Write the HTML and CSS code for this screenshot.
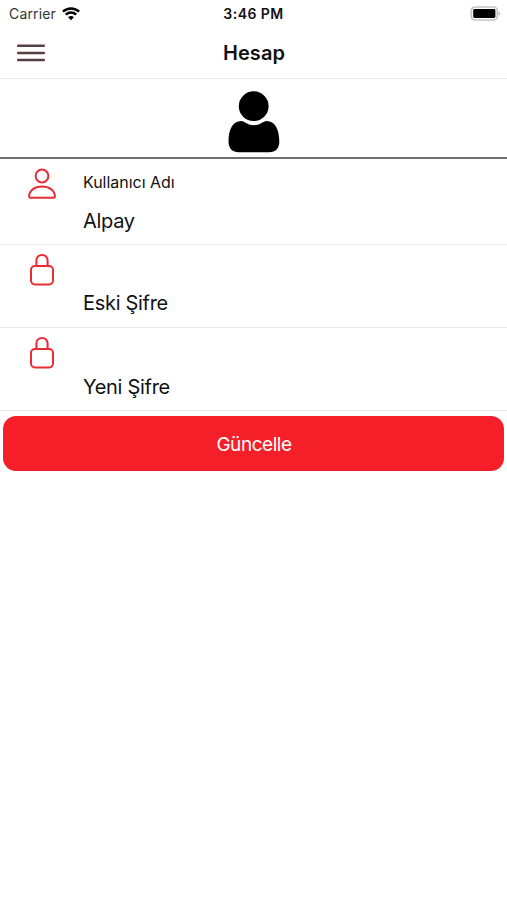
FILE: index.html
```html
<!DOCTYPE html>
<html lang="tr">
<head>
<meta charset="utf-8">
<meta name="viewport" content="width=device-width, initial-scale=1">
<title>Hesap</title>
<link rel="stylesheet" href="styles.css">
</head>
<body>
<div class="status">
  <div class="network"><span class="carrier">Carrier</span>
    <svg class="wifi" width="18" height="14" viewBox="0 0 18 14" fill="none" stroke="#000" stroke-width="2.5"><path d="M.9 4.6C5.5.3 12.5.3 17.1 4.6M3.8 7.6c3-2.7 7.4-2.7 10.4 0"/><path d="M6.1 10.2c1.7-1.5 4.1-1.5 5.8 0L9 13.2z" fill="#000" stroke="none"/></svg>
  </div>
  <time class="clock">3:46 PM</time>
  <svg class="battery" width="31" height="16" viewBox="0 0 31 16"><rect x="1.3" y="1" width="26" height="13" rx="3.8" fill="#fff" stroke="#c4c4c4" stroke-width="1.7"/><rect x="3.2" y="3" width="22.2" height="9" rx="1.4"/><path d="M28.7 5.2q2.6 2.3 0 4.6z" fill="#aaa"/></svg>
</div>
<header class="navbar">
  <button class="menu" aria-label="Menü"><svg width="30" height="20" viewBox="0 0 30 20" stroke="#593e43" stroke-width="2.5" stroke-linecap="round"><path d="M2.2 2.7h25.6M2.2 9.9h25.6M2.2 17.1h25.6"/></svg></button>
  <h1 class="title">Hesap</h1>
</header>
<main>
  <div class="avatar">
    <svg width="52" height="62" viewBox="0 0 52 62"><circle cx="25.7" cy="15.2" r="14.9"/><path d="M13.2 30C4.8 30 .5 38.5.5 50.5C.5 57.4 4.4 61.3 11 61.3H41C47.6 61.3 51.3 57.4 51.3 50.5C51.3 38.5 47 30 38.6 30C35 30 33.2 34.2 25.8 34.2S16.8 30 13.2 30z"/></svg>
  </div>
  <section class="row row-user">
    <svg class="icon" width="30" height="34" viewBox="0 0 30 34" fill="none" stroke="#e92c36" stroke-width="2" stroke-linejoin="round"><circle cx="15" cy="9" r="6.4"/><path d="M2.1 29.4C2.4 23.3 7.9 19.5 15 19.5S27.6 23.3 27.9 29.4Q27.9 30.7 26.6 30.7H3.4Q2.1 30.7 2.1 29.4z"/></svg>
    <div class="field"><span class="label">Kullanıcı Adı</span><span class="value alpay">Alpay</span></div>
  </section>
  <section class="row row-old">
    <svg class="icon" width="30" height="34" viewBox="0 0 30 34" fill="none" stroke="#e92c36" stroke-width="2"><rect x="4" y="13" width="22" height="18.4" rx="3.8"/><path d="M9.4 13V7.6C9.4 4.3 11.8 1.9 15 1.9S20.6 4.3 20.6 7.6V13"/></svg>
    <div class="field"><span class="label"></span><span class="value">Eski Şifre</span></div>
  </section>
  <section class="row row-new">
    <svg class="icon" width="30" height="34" viewBox="0 0 30 34" fill="none" stroke="#e92c36" stroke-width="2"><rect x="4" y="13" width="22" height="18.4" rx="3.8"/><path d="M9.4 13V7.6C9.4 4.3 11.8 1.9 15 1.9S20.6 4.3 20.6 7.6V13"/></svg>
    <div class="field"><span class="label"></span><span class="value yeni">Yeni Şifre</span></div>
  </section>
  <button class="submit">Güncelle</button>
</main>
</body>
</html>
```
FILE: styles.css
```css
* { box-sizing: border-box; }
body {
  margin: 0;
  min-height: 100vh;
  background: #fff;
  color: #111;
  font-family: Inter, "Liberation Sans", sans-serif;
}
svg { display: block; flex: none; }
button { border: 0; padding: 0; background: none; font: inherit; }
.status {
  display: grid;
  grid-template-columns: 1fr auto 1fr;
  align-items: center;
  height: 27px;
  padding: 0 6px;
  font-size: 14px;
  line-height: 27px;
}
.network { display: flex; align-items: center; gap: 6px; padding-left: 3px; }
.carrier { color: #333; letter-spacing: .15px; }
.clock { font-weight: 600; letter-spacing: .45px; }
.battery { justify-self: end; }
.navbar {
  display: grid;
  grid-template-columns: 1fr auto 1fr;
  align-items: center;
  height: 52px;
  padding: 0 16px;
  border-bottom: 1px solid #ebebeb;
}
.menu { width: 30px; }
.title { margin: 0; padding-left: 1px; font-size: 20px; font-weight: 600; line-height: 52px; letter-spacing: .05px; }
.avatar {
  display: flex;
  justify-content: center;
  height: 80px;
  padding-top: 12px;
  border-bottom: 2px solid #746b6d;
}
.row {
  display: flex;
  gap: 26px;
  padding: 8px 27px 0;
  border-bottom: 1px solid #e7e7e7;
}
.row-user { height: 86px; }
.row-old { height: 83px; }
.row-new { height: 83px; }
.field { display: flex; flex-direction: column; }
.label { height: 31px; font-size: 16px; line-height: 30px; letter-spacing: -.03px; }
.value { font-size: 20px; line-height: 38px; letter-spacing: -.3px; }
.alpay { line-height: 48px; }
.yeni { line-height: 40px; }
.submit {
  display: block;
  width: calc(100% - 6px);
  height: 55px;
  margin: 5px 3px 0;
  padding: 1px 0 0 1px;
  border-radius: 13px;
  background: #f41f28;
  color: #fff;
  font-size: 19px;
  letter-spacing: -.45px;
}
```
